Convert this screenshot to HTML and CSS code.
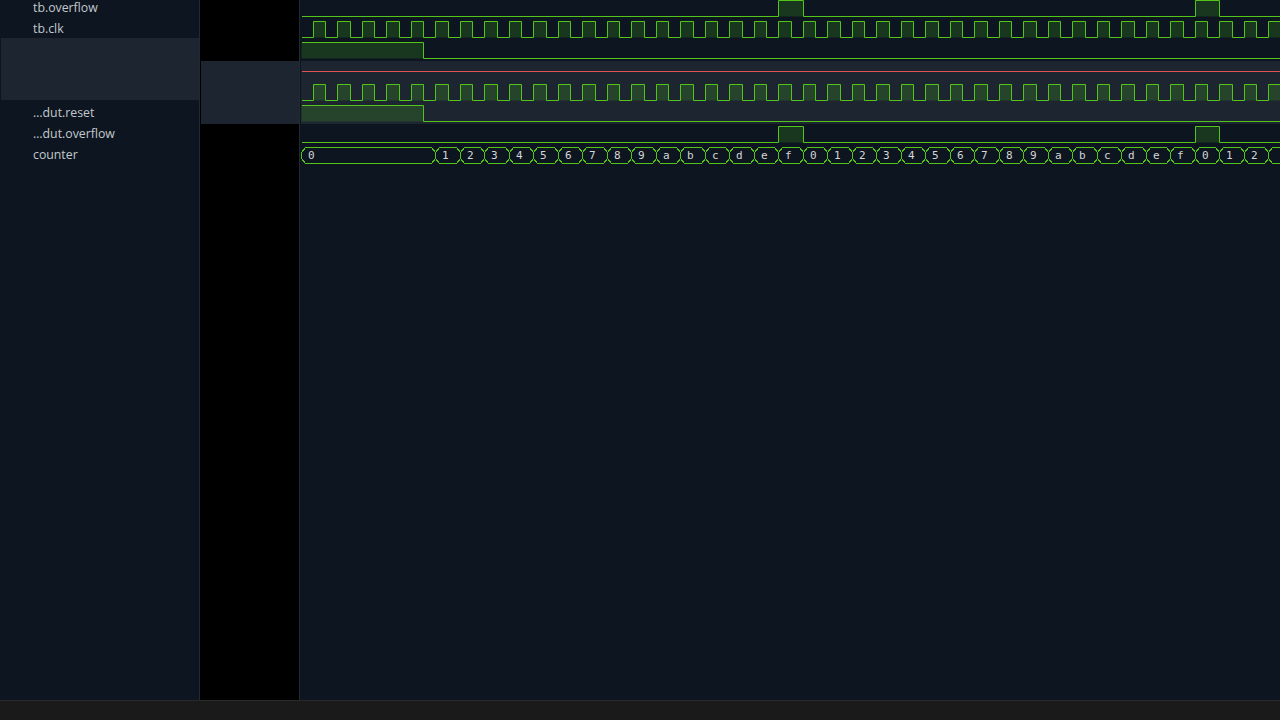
FILE: index.html
```html
<!DOCTYPE html>
<html lang="en">
<head>
<meta charset="utf-8">
<title>Waveform viewer</title>
<link rel="stylesheet" href="styles.css">
</head>
<body>
<div class="app">
  <div class="main">
    <aside class="names">
      <div class="name-list">
        <div class="name">tb.overflow</div>
        <div class="name">tb.clk</div>
        <div class="name-group"></div>
        <div class="name">…dut.reset</div>
        <div class="name">…dut.overflow</div>
        <div class="name">counter</div>
      </div>
    </aside>
    <div class="values"><div class="value-hl"></div></div>
    <div class="waves">
      <svg id="waves" class="wave-svg" width="980" height="700" viewBox="0 0 980 700" xmlns="http://www.w3.org/2000/svg"></svg>
    </div>
  </div>
  <footer class="status"></footer>
</div>
<script src="script.js"></script>
</body>
</html>
```

FILE: styles.css
```css
html, body {
  margin: 0;
  padding: 0;
  background: #0c1520;
  overflow: hidden;
}
body {
  font-family: "Open Sans", "Noto Sans", sans-serif;
}
.app {
  width: 1280px;
  height: 720px;
  display: flex;
  flex-direction: column;
}
.main {
  flex: 1;
  display: flex;
  min-height: 0;
}
.names {
  width: 199px;
  flex: none;
  background: #0c1520;
  border-right: 1px solid #212931;
  overflow: hidden;
}
.name-list {
  margin-top: -3px;
  display: flex;
  flex-direction: column;
}
.name {
  height: 21px;
  line-height: 21px;
  padding-left: 33px;
  font-size: 12.3px;
  color: #c4c8cc;
  white-space: nowrap;
}
.name-group {
  height: 62px;
  margin: -1px 0 2px 1px;
  background: #1c2530;
}
.values {
  width: 99px;
  flex: none;
  background: #000;
  border-right: 1px solid #212931;
  padding-top: 61px;
}
.value-hl {
  height: 63px;
  margin-left: 1px;
  background: #1c2530;
}
.waves {
  flex: 1;
  overflow: hidden;
  background: #0c1520;
}
.wave-svg {
  display: block;
}
.wave-svg .hl { fill: #1c2530; }
.wave-svg .line { fill: none; stroke: #52c41a; stroke-width: 1; }
.wave-svg .fill { fill: rgba(82, 196, 26, 0.2); stroke: none; }
.wave-svg .zline { stroke: #de5454; stroke-width: 1; }
.wave-svg .bus { fill: none; stroke: #52c41a; stroke-width: 1; shape-rendering: crispEdges; }
.wave-svg .bus-text {
  font-family: "DejaVu Sans Mono", "Liberation Mono", monospace;
  font-size: 11px;
  fill: #d6d6d6;
}
.status {
  height: 19px;
  flex: none;
  background: #1a1a1a;
  border-top: 1px solid #2a2a2a;
}
```

FILE: script.js
```js
(function () {
  var NS = 'http://www.w3.org/2000/svg';
  var svg = document.getElementById('waves');
  var W = 980;
  var HP = 12.25;
  var END = W + 2;
  function X(t) { return Math.floor(1 + HP * t) + 0.5; }
  function el(tag, attrs, text) {
    var e = document.createElementNS(NS, tag);
    for (var k in attrs) e.setAttribute(k, attrs[k]);
    if (text != null) e.textContent = text;
    svg.appendChild(e);
    return e;
  }

  el('rect', { x: 1, y: 61, width: W, height: 63, 'class': 'hl' });
  el('line', { x1: 2, x2: END, y1: 71.5, y2: 71.5, 'class': 'zline' });

  function digital(row, highs) {
    var yh = 21 * row + 0.5, yl = 21 * row + 16.5;
    var fills = [];
    var startHigh = highs.length && highs[0][0] <= 0;
    var d = 'M2 ' + (startHigh ? yh : yl);
    highs.forEach(function (h) {
      var a = h[0] <= 0 ? 1.5 : X(h[0]);
      var b = X(h[1]);
      if (a > END) return;
      if (h[0] > 0) d += ' H' + a + ' V' + yh;
      if (b < END) d += ' H' + b + ' V' + yl;
      fills.push([a, Math.min(b, END)]);
    });
    d += ' H' + END;
    fills.forEach(function (f) {
      el('rect', { x: f[0], y: yh, width: f[1] - f[0], height: yl - yh, 'class': 'fill' });
    });
    el('path', { d: d, 'class': 'line' });
  }

  var clk = [];
  for (var j = 0; 1 + HP * (2 * j + 1) < W + 10; j++) clk.push([2 * j + 1, 2 * j + 2]);

  digital(0, [[39, 41], [73, 75]]);
  digital(1, clk);
  digital(2, [[0, 10]]);
  digital(4, clk);
  digital(5, [[0, 10]]);
  digital(6, [[39, 41], [73, 75]]);

  // counter bus
  var bounds = [0];
  for (var t = 11; 1 + HP * t < W + 40; t += 2) bounds.push(t);
  var top = 147.5, bot = 163.5, s = 4, v = 5;
  for (var i = 0; i < bounds.length - 1; i++) {
    var xs = bounds[i] === 0 ? 1.5 : X(bounds[i]);
    var xe = X(bounds[i + 1]);
    var pts = [
      [xs + s, top], [xe - s, top], [xe, top + v], [xe, bot - v],
      [xe - s, bot], [xs + s, bot], [xs, bot - v], [xs, top + v]
    ].map(function (p) { return p[0] + ',' + p[1]; }).join(' ');
    el('polygon', { points: pts, 'class': 'bus' });
    if (xs + 14 < W) {
      el('text', { x: Math.round(xs + 6), y: 159, 'class': 'bus-text' }, (i % 16).toString(16));
    }
  }
})();
```
